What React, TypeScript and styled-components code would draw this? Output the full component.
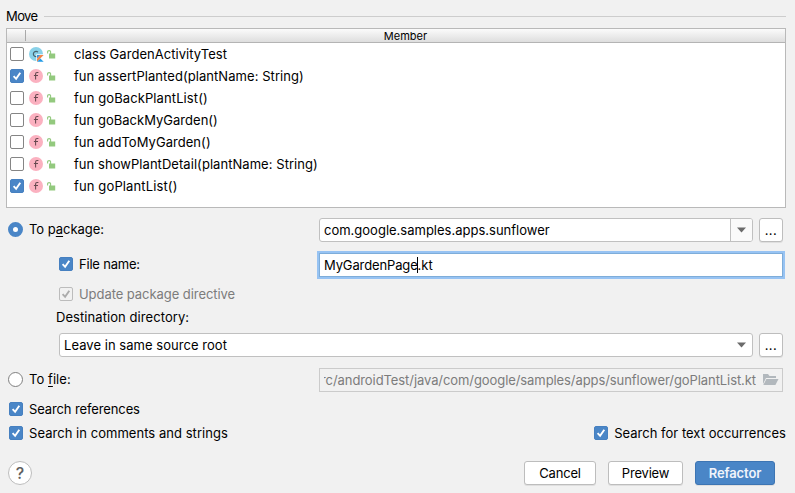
import React from 'react';
import styled, { createGlobalStyle, css } from 'styled-components';

const GlobalStyle = createGlobalStyle`
  * { box-sizing: border-box; }
  body { margin: 0; background: #f1f1f1; }
`;

const Dialog = styled.main`
  width: 795px;
  height: 493px;
  overflow: hidden;
  background: #f1f1f1;
  color: #000;
  font: 13px/16px Inter, "Liberation Sans", sans-serif;
  display: flex;
  flex-direction: column;
  white-space: nowrap;
`;

const Text = styled.span<{ $spacing?: number; $disabled?: boolean }>`
  letter-spacing: ${(p) => p.$spacing ?? 0}px;
  color: ${(p) => (p.$disabled ? '#7c7c7c' : 'inherit')};
  u { text-underline-offset: 2px; text-decoration-thickness: 1px; text-decoration-skip-ink: none; }
`;

const GroupTitle = styled.div`
  height: 28px;
  padding: 4px 9px 0 6px;
  display: flex;
  align-items: center;
  gap: 6px;
  &::after { content: ''; flex: 1; height: 1px; background: #cdcdcd; }
`;

const Table = styled.div`
  height: 180px;
  margin: 0 9px 0 6px;
  border: 1px solid #b9b9b9;
  background: #fff;
`;

const TableHeader = styled.div`
  height: 14px;
  display: flex;
  background: linear-gradient(#fbfbfb, #dedede);
  border-bottom: 1px solid #b4b4b4;
  font-size: 11px;
  line-height: 15px;
`;

const CheckColumn = styled.div`
  width: 19px;
  height: 11px;
  margin-top: 1px;
  border-right: 1px solid #a9a9a9;
`;

const MemberColumn = styled.div`
  flex: 1;
  text-align: center;
`;

const MemberRow = styled.div`
  height: 22px;
  padding-left: 3px;
  display: flex;
  align-items: center;
`;

const MemberIcons = styled.div`
  width: 45px;
  margin-left: 5px;
  display: flex;
  align-items: center;
  gap: 3px;
`;

const Glyph = styled.svg`
  display: block;
  flex: none;
`;

const Box = styled.span<{ $checked?: boolean; $disabled?: boolean }>`
  width: 14px;
  height: 14px;
  flex: none;
  border: 1px solid #858585;
  border-radius: 2px;
  background: #fff;
  ${(p) => p.$checked && css`background: #4a86c7; border-color: #4680c0;`}
  ${(p) => p.$disabled && css`background: #f1f1f1; border-color: #bcbcbc;`}
`;

const Line = styled.div<{ $height: number; $indent?: number }>`
  height: ${(p) => p.$height}px;
  padding: 0 12px 0 ${(p) => p.$indent ?? 8}px;
  display: flex;
  align-items: center;
`;

const Label = styled.label<{ $width?: number }>`
  width: ${(p) => (p.$width ? p.$width + 'px' : 'auto')};
  flex: none;
  display: flex;
  align-items: center;
  gap: 6px;
  ${(p) => p.$width && css`margin-bottom: 2px;`}
`;

const Radio = styled.span<{ $selected?: boolean }>`
  width: 15px;
  height: 15px;
  flex: none;
  margin-top: 1px;
  border-radius: 50%;
  border: 1px solid #808080;
  background: #fff;
  ${(p) => p.$selected && css`border: 5px solid #4a86c7;`}
`;

const Field = styled.div<{ $focused?: boolean; $disabled?: boolean }>`
  flex: 1;
  min-width: 0;
  height: 24px;
  display: flex;
  align-items: center;
  padding: 0 4px;
  border: 1px solid ${(p) => (p.$focused ? '#7eadd9' : p.$disabled ? '#cbcbcb' : '#c0c0c0')};
  border-radius: ${(p) => (p.$focused || p.$disabled ? 0 : 3)}px;
  background: ${(p) => (p.$disabled ? '#f1f1f1' : '#fff')};
  ${(p) => p.$focused && css`box-shadow: 0 0 0 2px #97c3f3;`}
`;

const Caret = styled.span`
  width: 1px;
  height: 16px;
  margin: -1px 0 0 -1px;
  background: #000;
`;

const ArrowCell = styled.div<{ $divided?: boolean }>`
  width: 22px;
  height: 22px;
  margin: 0 -4px 0 auto;
  flex: none;
  display: flex;
  align-items: center;
  justify-content: center;
  border-radius: 0 2px 2px 0;
  ${(p) => p.$divided && css`background: #fafafa; border-left: 1px solid #c0c0c0;`}
`;

const PathClip = styled.div`
  width: 432px;
  flex: none;
  overflow: hidden;
  display: flex;
  justify-content: flex-end;
`;

const Button = styled.button<{ $width: number; $primary?: boolean; $spacing?: number }>`
  width: ${(p) => p.$width}px;
  height: 24px;
  flex: none;
  padding: 0;
  border: 1px solid #bdbdbd;
  border-radius: 3px;
  background: #fff;
  color: #000;
  font: inherit;
  letter-spacing: ${(p) => p.$spacing ?? 0}px;
  box-shadow: 0 1px 0 #dfdfdf;
  ${(p) => p.$primary && css`
    background: #4a86c7; border-color: #3d75b3; color: #f1f4fb; font-weight: 600;
  `}
`;

const BrowseButton = styled(Button)`
  margin-left: 6px;
`;

const Stack = styled.div`
  padding-top: 10px;
  display: flex;
  flex-direction: column;
`;

const SearchOptions = styled.div`
  margin-top: -6px;
`;

const OptionRow = styled.div`
  height: 24px;
  padding: 0 9px;
  display: flex;
  align-items: center;
  justify-content: space-between;
`;

const Footer = styled.footer`
  margin-top: 15px;
  height: 26px;
  padding: 0 20px 0 8px;
  display: flex;
  align-items: center;
  gap: 12px;
`;

const Help = styled.div`
  width: 24px;
  height: 24px;
  margin-right: auto;
  display: flex;
  align-items: center;
  justify-content: center;
  border: 1px solid #bdbdbd;
  border-radius: 50%;
  background: #fff;
  color: #606060;
  font-size: 16px;
  font-weight: 500;
`;

const Check = ({ checked, disabled }: { checked?: boolean; disabled?: boolean }) => (
  <Box $checked={checked} $disabled={disabled}>
    {checked && (
      <Glyph width="12" height="12" viewBox="0 0 12 12">
        <path d="M2.6 6.1 L5.1 8.8 L9.3 2.7" fill="none" stroke={disabled ? '#ababab' : '#fff'} strokeWidth="1.9" />
      </Glyph>
    )}
  </Box>
);

const ClassIcon = () => (
  <Glyph width="15" height="15" viewBox="0 0 15 15">
    <circle cx="7" cy="7" r="7" fill="#89d1e8" />
    <path d="M9 5.1 A2.7 2.7 0 1 0 9 8.9" fill="none" stroke="#47636d" strokeWidth="1.2" />
    <path d="M7.3 7.3H15V15H7.3Z" fill="#fff" />
    <path d="M8 8H11.5L8 11.5Z" fill="#3a91db" />
    <path d="M11.3 8H14.7L8 14.7V11.4Z" fill="#f58345" />
    <path d="M8 14.7L11.3 11.4L14.7 14.7Z" fill="#249be6" />
  </Glyph>
);

const FunctionIcon = () => (
  <Glyph width="15" height="15" viewBox="0 0 15 15">
    <circle cx="7" cy="7" r="7" fill="#fbb1c0" />
    <path d="M9.4 3.5H8Q6.6 3.5 6.6 5V10.6M4.9 6.5H9" fill="none" stroke="#66494f" strokeWidth="1.05" />
  </Glyph>
);

const OpenLock = () => (
  <Glyph width="9" height="9" viewBox="0 0 9 9">
    <path d="M0.6 3.6V1.8Q0.6 0.6 2.1 0.6Q3.6 0.6 3.6 1.8V4" fill="none" stroke="#93c97e" strokeWidth="1.1" />
    <rect x="2" y="3.5" width="6.2" height="5" fill="#93c97e" />
  </Glyph>
);

const Arrow = () => (
  <Glyph width="9" height="6" viewBox="0 0 9 6">
    <path d="M0 0.5H9L4.5 5.5Z" fill="#6b6b6b" />
  </Glyph>
);

const Folder = () => (
  <Glyph width="16" height="12" viewBox="0 0 16 12">
    <path d="M0 0H5L6.5 2H13V4H3L0 10Z" fill="#b2b8bd" />
    <path d="M3.4 5H15.5L12.4 11H0.3Z" fill="#b2b8bd" />
  </Glyph>
);

const members = [
  { name: 'class GardenActivityTest', spacing: 0.05, isClass: true },
  { name: 'fun assertPlanted(plantName: String)', spacing: 0.06, checked: true },
  { name: 'fun goBackPlantList()', spacing: 0.1 },
  { name: 'fun goBackMyGarden()', spacing: 0.02 },
  { name: 'fun addToMyGarden()', spacing: 0.05 },
  { name: 'fun showPlantDetail(plantName: String)', spacing: 0.05 },
  { name: 'fun goPlantList()', spacing: 0.13, checked: true },
];

export default function App() {
  return (
    <Dialog>
      <GlobalStyle />
      <GroupTitle><Text $spacing={-0.6}>Move</Text></GroupTitle>
      <Table>
        <TableHeader>
          <CheckColumn />
          <MemberColumn><Text>Member</Text></MemberColumn>
        </TableHeader>
        {members.map((m) => (
          <MemberRow key={m.name}>
            <Check checked={m.checked} />
            <MemberIcons>
              {m.isClass ? <ClassIcon /> : <FunctionIcon />}
              <OpenLock />
            </MemberIcons>
            <Text $spacing={m.spacing}>{m.name}</Text>
          </MemberRow>
        ))}
      </Table>
      <Stack>
        <Line $height={24}>
          <Label $width={311}><Radio $selected /><Text $spacing={-0.03}>To p<u>a</u>ckage:</Text></Label>
          <Field>
            <Text>com.google.samples.apps.sunflower</Text>
            <ArrowCell $divided><Arrow /></ArrowCell>
          </Field>
          <BrowseButton $width={24} $spacing={0.5}>...</BrowseButton>
        </Line>
        <Line $height={46} $indent={59}>
          <Label $width={260}><Check checked /><Text $spacing={-0.2}>File name:</Text></Label>
          <Field $focused>
            <Text $spacing={-0.13}>MyGardenPage</Text><Caret /><Text>.kt</Text>
          </Field>
        </Line>
        <Line $height={12} $indent={59}>
          <Label><Check checked disabled /><Text $disabled $spacing={-0.06}>Update package directive</Text></Label>
        </Line>
        <Line $height={33} $indent={56}><Text $spacing={0.07}>Destination directory:</Text></Line>
        <Line $height={24} $indent={59}>
          <Field>
            <Text $spacing={0.04}>Leave in same source root</Text>
            <ArrowCell><Arrow /></ArrowCell>
          </Field>
          <BrowseButton $width={24} $spacing={0.5}>...</BrowseButton>
        </Line>
        <Line $height={46}>
          <Label $width={311}><Radio /><Text $spacing={0.06}>To <u>f</u>ile:</Text></Label>
          <Field $disabled>
            <PathClip><Text $disabled $spacing={-0.08}>src/androidTest/java/com/google/samples/apps/sunflower/goPlantList.kt</Text></PathClip>
            <ArrowCell><Folder /></ArrowCell>
          </Field>
        </Line>
      </Stack>
      <SearchOptions>
        <OptionRow>
          <Label><Check checked /><Text $spacing={-0.12}>Search references</Text></Label>
        </OptionRow>
        <OptionRow>
          <Label><Check checked /><Text $spacing={0.04}>Search in comments and strings</Text></Label>
          <Label><Check checked /><Text $spacing={0.01}>Search for text occurrences</Text></Label>
        </OptionRow>
      </SearchOptions>
      <Footer>
        <Help>?</Help>
        <Button $width={72} $spacing={-0.2}>Cancel</Button>
        <Button $width={75} $spacing={-0.2}>Preview</Button>
        <Button $width={80} $primary $spacing={-0.1}>Refactor</Button>
      </Footer>
    </Dialog>
  );
}
